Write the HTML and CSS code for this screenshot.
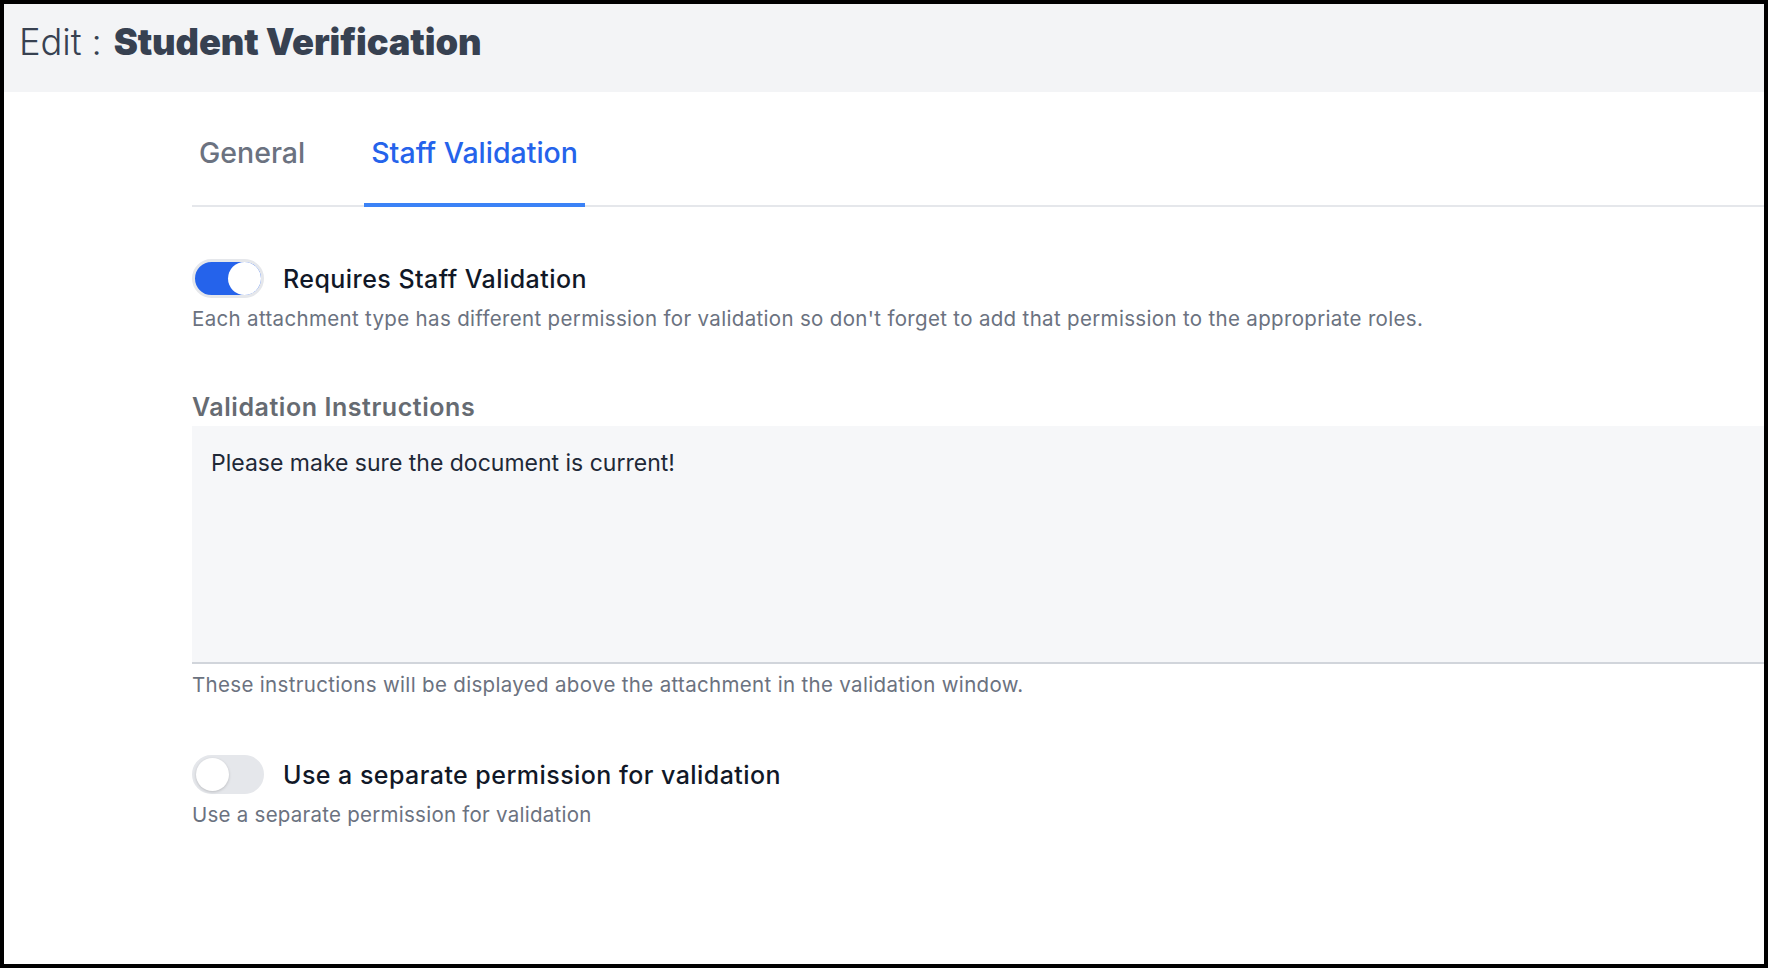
FILE: index.html
```html
<!DOCTYPE html>
<html lang="en">
<head>
<meta charset="utf-8">
<title>Edit : Student Verification</title>
<link rel="stylesheet" href="styles.css">
</head>
<body>
<div class="frame">
  <header class="page-header">
    <h1 class="page-title"><span class="title-prefix">Edit :</span><strong class="title-name">Student Verification</strong></h1>
  </header>
  <main class="content">
    <nav class="tabs">
      <a class="tab">General</a>
      <a class="tab tab-active">Staff Validation</a>
    </nav>

    <section class="field field-toggle-first">
      <div class="toggle-row">
        <span class="toggle toggle-on"><span class="knob"></span></span>
        <span class="toggle-label">Requires Staff Validation</span>
      </div>
      <p class="help">Each attachment type has different permission for validation so don't forget to add that permission to the appropriate roles.</p>
    </section>

    <section class="field field-text">
      <label class="field-label">Validation Instructions</label>
      <div class="textarea">Please make sure the document is current!</div>
      <p class="help help-after-input">These instructions will be displayed above the attachment in the validation window.</p>
    </section>

    <section class="field field-toggle-second">
      <div class="toggle-row">
        <span class="toggle"><span class="knob"></span></span>
        <span class="toggle-label">Use a separate permission for validation</span>
      </div>
      <p class="help">Use a separate permission for validation</p>
    </section>
  </main>
</div>
</body>
</html>
```

FILE: styles.css
```css
html, body {
  margin: 0;
  padding: 0;
}

body {
  font-family: Inter, "Noto Sans", Roboto, sans-serif;
  background: #000;
}

.frame {
  box-sizing: border-box;
  width: 1768px;
  height: 968px;
  border: 4px solid #000;
  background: #fff;
  overflow: hidden;
}

.page-header {
  height: 88px;
  background: #f3f4f6;
  display: flex;
  align-items: center;
  padding-left: 15px;
}

.page-title {
  margin: 0 0 13px 0;
  font-size: 36.3px;
  line-height: 44px;
  color: #374151;
  font-weight: 700;
  letter-spacing: -0.1px;
}

.title-prefix {
  font-weight: 300;
  margin-right: 12px;
}

.content {
  padding-left: 188px;
}

.tabs {
  display: flex;
  gap: 52px;
  margin-top: 43px;
  border-bottom: 2px solid #e5e7eb;
}

.tab {
  display: block;
  padding: 0 7px 32px;
  margin-bottom: -2px;
  font-size: 28.5px;
  line-height: 36px;
  font-weight: 500;
  color: #6b7280;
  border-bottom: 4px solid transparent;
}

.tab-active {
  color: #2563eb;
  border-bottom-color: #3b82f6;
}

.toggle-row {
  display: flex;
  align-items: center;
  gap: 19px;
}

.toggle {
  box-sizing: border-box;
  width: 72px;
  height: 39px;
  border: 3px solid #e5e7eb;
  border-radius: 20px;
  background: #e5e7eb;
  display: flex;
  align-items: center;
  padding: 0 1px;
  flex-shrink: 0;
}

.toggle-on {
  background: #2563eb;
  justify-content: flex-end;
  padding: 0;
}

.knob {
  width: 33px;
  height: 33px;
  border-radius: 50%;
  background: #fff;
  box-shadow: 0 1px 3px rgba(0, 0, 0, 0.18);
}

.toggle-on .knob {
  box-shadow: none;
}

.toggle-label {
  font-size: 25px;
  line-height: 32px;
  font-weight: 500;
  color: #111827;
  letter-spacing: 0.45px;
}

.field-toggle-first {
  margin-top: 52px;
}

.help {
  margin: 8px 0 0 0;
  font-size: 20.5px;
  line-height: 26px;
  color: #6b7280;
  letter-spacing: 0.33px;
}

.field-text {
  margin-top: 60px;
}

.field-label {
  display: block;
  font-size: 25px;
  line-height: 30px;
  font-weight: 600;
  color: #666b72;
  letter-spacing: 0.55px;
}

.textarea {
  box-sizing: border-box;
  margin-top: 4px;
  height: 238px;
  background: #f6f7f9;
  border-bottom: 2px solid #d1d5db;
  padding: 22px 19px 20px;
  font-size: 23px;
  line-height: 30px;
  color: #1f2937;
}

.help-after-input {
  margin-top: 8px;
}

.field-toggle-second {
  margin-top: 57px;
}

.field-toggle-second .help {
  margin-top: 8px;
  letter-spacing: 0.25px;
}
```
